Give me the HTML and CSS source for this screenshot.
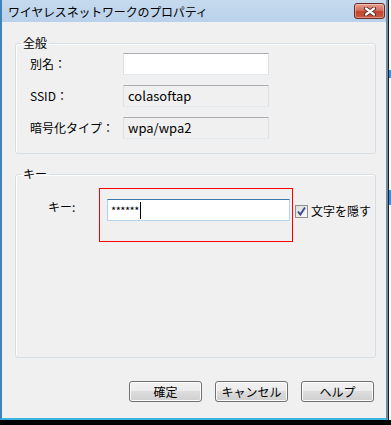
FILE: index.html
```html
<!DOCTYPE html>
<html lang="ja">
<head>
    <meta charset="UTF-8">
    <meta name="viewport" content="width=device-width, initial-scale=1.0">
    <title>ワイヤレスネットワークのプロパティ</title>
    <link rel="stylesheet" href="styles.css">
</head>
<body>
    <div class="screen">
        <div class="window">
            <div class="titlebar">
                <span class="title">ワイヤレスネットワークのプロパティ</span>
                <button class="close" aria-label="閉じる">
                    <svg width="12" height="9" viewBox="0 0 12 9">
                        <path d="M2 1.5 L10 7.5 M10 1.5 L2 7.5" stroke="#4a2020" stroke-width="4" stroke-linecap="round"/>
                        <path d="M2 1.5 L10 7.5 M10 1.5 L2 7.5" stroke="#ffffff" stroke-width="2.2" stroke-linecap="round"/>
                    </svg>
                </button>
            </div>

            <div class="content">
                <fieldset class="group general">
                    <legend>全般</legend>
                    <div class="row">
                        <span class="label">別名：</span>
                        <div class="field"></div>
                    </div>
                    <div class="row">
                        <span class="label">SSID：</span>
                        <div class="field readonly">colasoftap</div>
                    </div>
                    <div class="row last">
                        <span class="label">暗号化タイプ：</span>
                        <div class="field readonly">wpa/wpa2</div>
                    </div>
                </fieldset>

                <fieldset class="group key">
                    <legend>キー</legend>
                    <div class="key-row">
                        <span class="key-label">キー:</span>
                        <div class="key-box">
                            <div class="field focus"><span class="stars">******</span><span class="caret"></span></div>
                        </div>
                        <label class="hide">
                            <span class="check">
                                <svg width="11" height="11" viewBox="0 0 11 11">
                                    <path d="M2 5.5 L4.3 8.5 L9 1.5" fill="none" stroke="#3b4f8f" stroke-width="2"/>
                                </svg>
                            </span>
                            文字を隠す
                        </label>
                    </div>
                </fieldset>

                <div class="button-container">
                    <button class="btn">確定</button>
                    <button class="btn">キャンセル</button>
                    <button class="btn">ヘルプ</button>
                </div>
            </div>
        </div>
        <div class="behind"></div>
    </div>
</body>
</html>
```

FILE: styles.css
```css
body {
    margin: 0;
    background-color: #000;
    font-family: "Noto Sans CJK JP", "Noto Sans", sans-serif;
    font-size: 12px;
    color: #000;
}
.screen {
    display: flex;
    height: 425px;
}
.window {
    width: 388px;
    height: 420px;
    box-sizing: border-box;
    display: flex;
    flex-direction: column;
    border-left: 2px solid #3f83b8;
    border-right: 2px solid #6f8aa5;
    border-bottom: 2px solid #38b4e0;
    background-color: #f0f0f0;
}
.behind {
    width: 3px;
    height: 420px;
    background: linear-gradient(#fff 0 70px, #3d8fe0 70px 78px, #fff 78px 190px, #3d8fe0 190px 205px, #fff 205px);
    border-left: 1px solid #1a1a1a;
    box-sizing: border-box;
}

/* Title bar */
.titlebar {
    height: 22px;
    flex: none;
    display: flex;
    align-items: flex-start;
    justify-content: space-between;
    padding: 0 1px 0 6px;
    background: linear-gradient(#c6daee, #b9d1ea);
}
.title {
    line-height: 14px;
    margin-top: 5px;
    letter-spacing: -0.2px;
}
.close {
    width: 31px;
    height: 16px;
    margin-top: 3px;
    padding: 0;
    display: flex;
    align-items: center;
    justify-content: center;
    border: 1px solid #6b2a24;
    border-radius: 3px;
    background: linear-gradient(#e6a08f, #d3705d 45%, #c2452f 55%, #c95a42);
    box-shadow: inset 0 0 0 1px rgba(255, 255, 255, 0.35);
}

/* Content */
.content {
    flex: 1;
    padding: 14px 12px 0 13px;
    display: flex;
    flex-direction: column;
}
.group {
    margin: 0;
    padding: 3px 0 0 5px;
    border: 1px solid #d5dfe5;
    border-radius: 3px;
    box-shadow: inset 1px 1px 0 #fff;
    width: 361px;
    box-sizing: border-box;
}
.group legend {
    padding: 0 2px;
    line-height: 14px;
}
.general {
    padding-bottom: 14px;
}
.row {
    display: flex;
    align-items: center;
    margin-bottom: 10px;
    padding-left: 9px;
}
.row.last {
    margin-top: 3px;
    margin-bottom: 0;
}
.label {
    width: 93px;
    line-height: 14px;
}
.field {
    width: 146px;
    height: 22px;
    box-sizing: border-box;
    background-color: #fff;
    border: 1px solid #dbdfe6;
    border-top-color: #abadb3;
    border-bottom-color: #e3e9ef;
    padding: 0 4px;
    line-height: 20px;
    font-size: 13px;
}
.field.readonly {
    background-color: #f0f0f0;
}

/* Key group */
.key {
    margin-top: 13px;
    height: 191px;
    padding-top: 7px;
}
.key-row {
    display: flex;
    align-items: flex-start;
    padding-left: 27px;
}
.key-label {
    width: 51px;
    line-height: 14px;
    margin-top: 12px;
}
.key-box {
    width: 194px;
    height: 54px;
    box-sizing: border-box;
    border: 1px solid #ff0000;
    padding: 10px 0 0 7px;
}
.field.focus {
    width: 183px;
    display: flex;
    align-items: center;
    border-color: #b5d2e8;
    border-top-color: #3d7bad;
    padding-left: 3px;
}
.stars {
    font-size: 11px;
    letter-spacing: -0.5px;
    line-height: 16px;
}
.caret {
    width: 1px;
    height: 17px;
    background-color: #000;
    margin-left: 1px;
}
.hide {
    display: flex;
    align-items: center;
    gap: 3px;
    margin: 16px 0 0 2px;
    line-height: 14px;
}
.check {
    width: 13px;
    height: 13px;
    box-sizing: border-box;
    border: 1px solid #8f8f8f;
    background: linear-gradient(135deg, #dcdcdc, #fbfbfb);
    display: flex;
    align-items: center;
    justify-content: center;
}

/* Buttons */
.button-container {
    display: flex;
    justify-content: flex-end;
    gap: 13px;
    margin-top: 23px;
}
.btn {
    width: 73px;
    height: 21px;
    padding: 0;
    font-family: inherit;
    font-size: 12px;
    line-height: 14px;
    color: #000;
    border: 1px solid #707070;
    border-radius: 3px;
    background: linear-gradient(#f2f2f2, #ebebeb 50%, #dddddd 50%, #cfcfcf);
    box-shadow: inset 0 0 0 1px #fcfcfc;
    cursor: pointer;
}
.btn:hover {
    background: linear-gradient(#eaf6fd, #d9f0fc 50%, #bee6fd 50%, #a7d9f5);
}
```
